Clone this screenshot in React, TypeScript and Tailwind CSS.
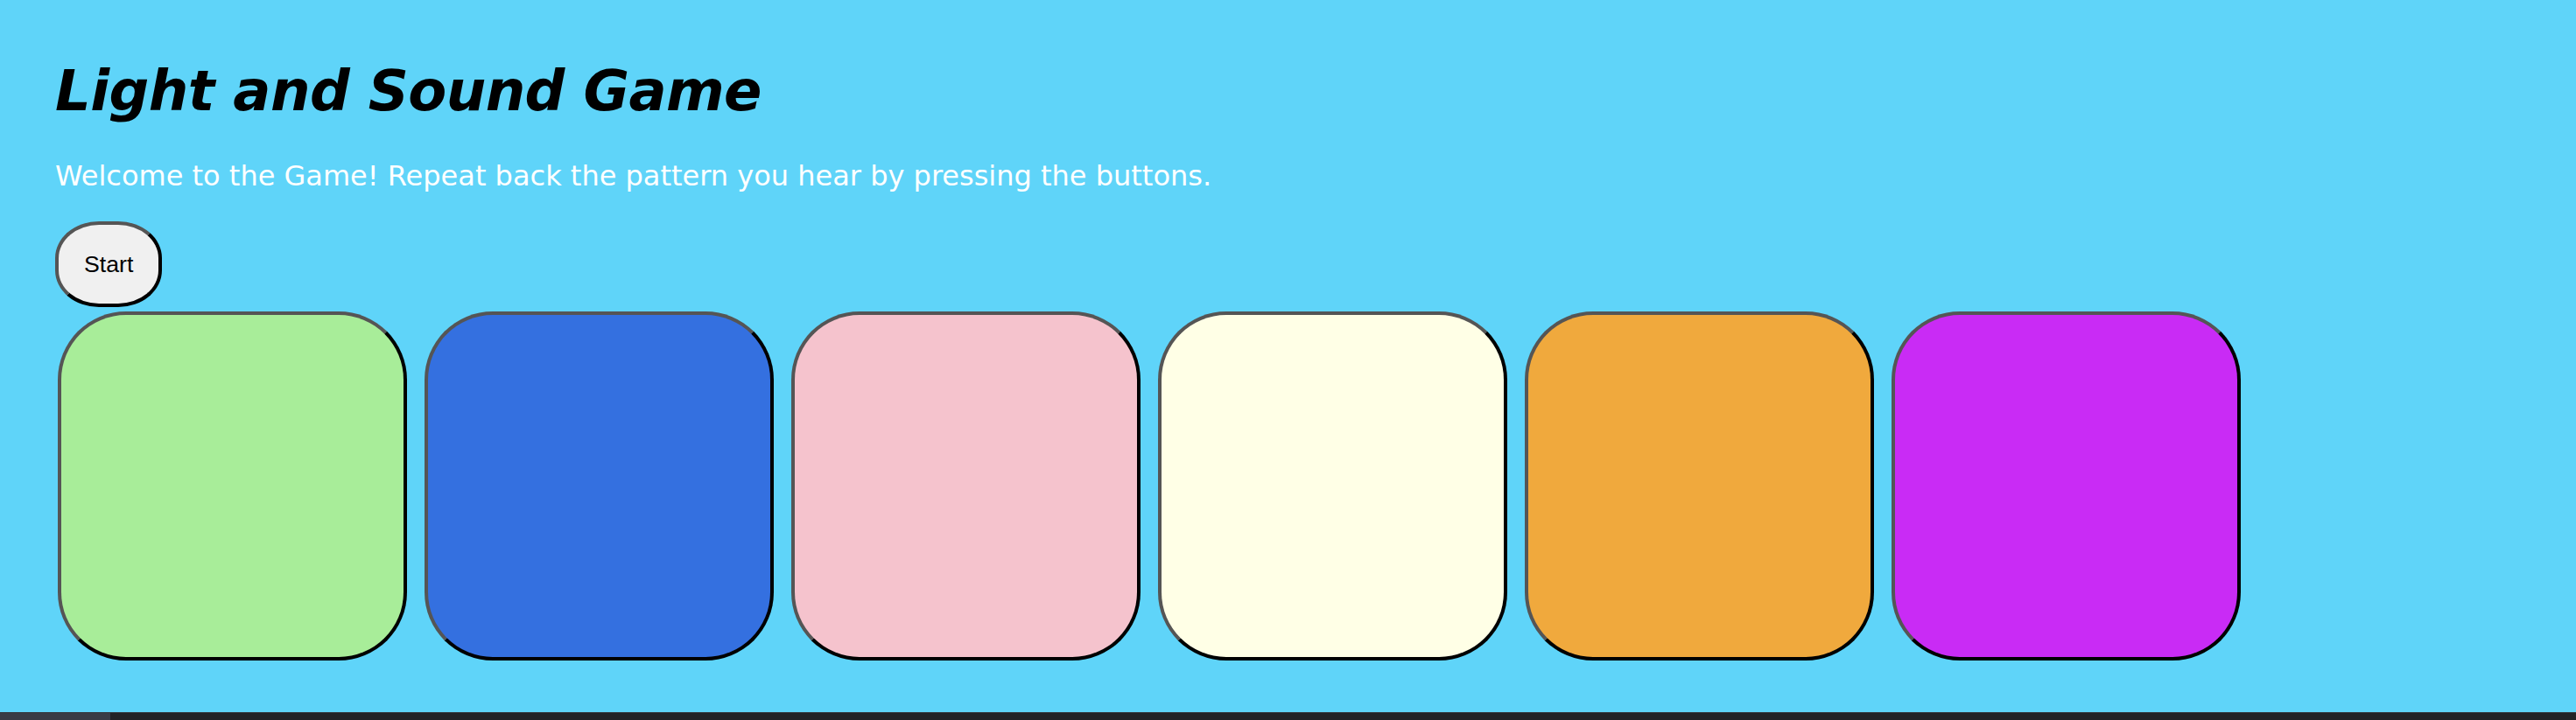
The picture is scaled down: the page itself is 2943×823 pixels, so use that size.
import React from 'react';

const pads = [
  { id: 1, color: 'bg-[#a8ed99]' },
  { id: 2, color: 'bg-[#3470e0]' },
  { id: 3, color: 'bg-[#f5c3cd]' },
  { id: 4, color: 'bg-[#ffffe6]' },
  { id: 5, color: 'bg-[#f0a93d]' },
  { id: 6, color: 'bg-[#c92bf5]' },
];

function Pad({ color }: { color: string }) {
  return (
    <button
      className={`w-[399px] h-[399px] shrink-0 rounded-[78px] border-4 border-t-[#555555] border-l-[#555555] border-b-black border-r-black ${color}`}
    />
  );
}

export default function App() {
  return (
    <div className="h-screen flex flex-col bg-[#5fd4f9] font-['DejaVu_Sans',Verdana,sans-serif]">
      <div className="flex-1 pl-[63px] pt-[67px]">
        {/* Title + intro */}
        <h1 className="text-[64px] leading-[74px] font-bold italic tracking-[-0.6px] text-black">
          Light and Sound Game
        </h1>
        <p className="mt-[42px] text-[32px] leading-[37px] text-white">
          Welcome to the Game! Repeat back the pattern you hear by pressing the buttons.
        </p>

        <button className="mt-[33px] px-[29px] py-[30px] text-[26.67px] leading-[30px] text-black bg-[#f0f0f0] rounded-[50px/42px] border-4 border-t-[#555555] border-l-[#555555] border-b-black border-r-black font-['Liberation_Sans',Arial,sans-serif]">
          Start
        </button>

        {/* Game pads */}
        <div className="flex gap-[20px] mt-[5px] pl-[3px]">
          {pads.map((p) => (
            <Pad key={p.id} color={p.color} />
          ))}
        </div>
      </div>

      {/* Scrollbar strip */}
      <div className="h-[9px] bg-[#222327] border-t border-[#34363b] flex">
        <div className="w-[126px] bg-[#393b45]" />
      </div>
    </div>
  );
}
